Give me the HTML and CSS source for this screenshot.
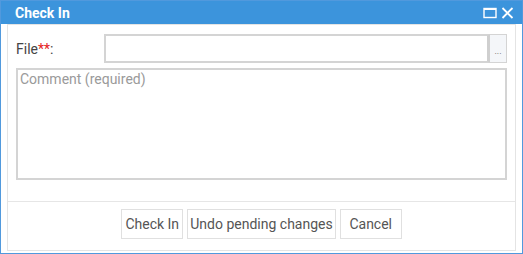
FILE: index.html
```
<!DOCTYPE html>
<html>
<head>
<meta charset="utf-8">
<link rel="stylesheet" href="styles.css">
</head>
<body>
<div class="window">
  <div class="titlebar">
    <span class="title">Check In</span>
    <span class="tools">
      <svg class="tool" width="14" height="12" viewBox="0 0 14 12"><rect x="1" y="1.5" width="12" height="9" fill="none" stroke="#fff" stroke-width="1.4"/><line x1="1" y1="2" x2="13" y2="2" stroke="#fff" stroke-width="2"/></svg>
      <svg class="tool" width="13" height="12" viewBox="0 0 13 12"><path d="M1.5 1 L11.5 11 M11.5 1 L1.5 11" stroke="#fff" stroke-width="1.8" fill="none"/></svg>
    </span>
  </div>
  <div class="content">
    <div class="panel">
      <div class="form">
        <div class="row">
          <label class="label">File<span class="req">**</span>:</label>
          <div class="field">
            <div class="input"></div>
            <div class="browse">...</div>
          </div>
        </div>
        <div class="comment">Comment (required)</div>
      </div>
      <div class="footer">
        <button class="btn">Check In</button>
        <button class="btn">Undo pending changes</button>
        <button class="btn">Cancel</button>
      </div>
    </div>
  </div>
</div>
</body>
</html>
```
FILE: styles.css
```
* { box-sizing: border-box; }
html, body { margin: 0; padding: 0; background: #fff; }
body { font-family: Roboto, "Liberation Sans", sans-serif; font-size: 14px; }
.window {
  width: 523px;
  height: 254px;
  border: 1px solid #5199dd;
  display: flex;
  flex-direction: column;
  background: #fff;
}
.titlebar {
  height: 23px;
  background: #3c94dc;
  display: flex;
  align-items: center;
  justify-content: space-between;
  padding: 0 8px 0 14px;
}
.title { color: #fff; font-weight: bold; font-size: 14px; }
.tools { display: flex; align-items: center; gap: 4px; }
.tool { display: block; }
.content {
  flex: 1;
  padding: 0 6px 2px 6px;
  display: flex;
}
.panel {
  flex: 1;
  border: 1px solid #e4e4e4;
  display: flex;
  flex-direction: column;
}
.form { padding: 9px 8px 0 8px; }
.row { display: flex; align-items: center; height: 29px; }
.label { width: 88px; color: #444; font-size: 14px; }
.req { color: #e52222; }
.field { flex: 1; display: flex; height: 29px; }
.input {
  flex: 1;
  border: 2px solid #d4d4d4;
  border-right: 3px solid #cfcfcf;
  background: #fff;
}
.browse {
  width: 17px;
  border: 1px solid #d4d4d4;
  border-left: 0;
  background: #f4f6f9;
  color: #666;
  font-size: 9px;
  display: flex;
  align-items: center;
  justify-content: center;
  padding-top: 4px;
}
.comment {
  margin-top: 5px;
  height: 112px;
  border: 2px solid #d4d4d4;
  color: #9a9a9a;
  padding: 1px 2px;
  font-size: 14px;
}
.footer {
  margin-top: 21px;
  border-top: 1px solid #e6e6e6;
  display: flex;
  justify-content: center;
  gap: 4px;
  padding-top: 7px;
}
.btn {
  height: 30px;
  min-width: 62px;
  padding: 0 2px;
  border: 1px solid #e0e0e0;
  background: #fff;
  color: #555;
  font-family: Roboto, "Liberation Sans", sans-serif;
  font-size: 14px;
  border-radius: 0;
}
```
